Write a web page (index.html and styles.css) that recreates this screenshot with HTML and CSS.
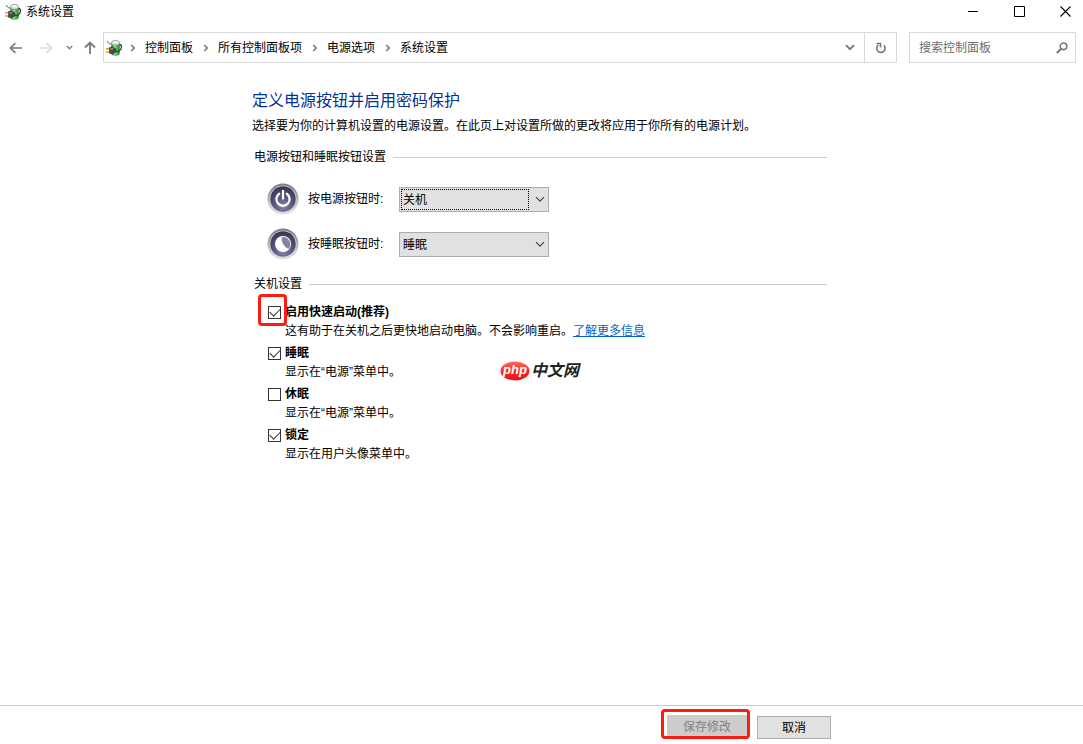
FILE: index.html
```html
<!DOCTYPE html>
<html lang="zh-CN">
<head>
<meta charset="utf-8">
<meta name="viewport" content="width=device-width, initial-scale=1">
<title>系统设置</title>
<link rel="stylesheet" href="styles.css">
</head>
<body>
<svg class="defs" width="0" height="0" aria-hidden="true">
  <defs>
    <linearGradient id="cell" x1="0" x2="1"><stop offset="0" stop-color="#2d9a38"/><stop offset=".4" stop-color="#7bea7c"/><stop offset="1" stop-color="#1c8a2a"/></linearGradient>
    <linearGradient id="ring" x1="0" y1="0" x2="0" y2="1"><stop offset="0" stop-color="#77777d"/><stop offset=".5" stop-color="#b4b4b8"/><stop offset="1" stop-color="#e6e6e6"/></linearGradient>
    <radialGradient id="disc" cx=".5" cy=".8" r=".8"><stop offset="0" stop-color="#8585aa"/><stop offset=".5" stop-color="#55557c"/><stop offset="1" stop-color="#34344f"/></radialGradient>
    <linearGradient id="oval" x1="0" y1="0" x2="0" y2="1"><stop offset="0" stop-color="#ff6a5e"/><stop offset=".5" stop-color="#f52c28"/><stop offset="1" stop-color="#e81515"/></linearGradient>
    <symbol id="power-plug" viewBox="0 0 16 16">
      <path d="M5.500 4h8v9.500c0 2.500-8 2.500-8 0z" fill="url(#cell)" stroke="#2c7a36" stroke-width=".5"/>
      <path d="M5.500 4.500V2.500C5.500-.2 13.500-.2 13.500 2.500v2c-2 1-6 1-8 0z" fill="#d8dbe8" stroke="#70747e" stroke-width=".6"/>
      <ellipse cx="9.500" cy="2.200" rx="2.600" ry="1" fill="#fff"/>
      <path d="M13.500 4.500c3 .5 2.500 4.500-.5 6.500-1 .8-2 .8-3 .5" fill="none" stroke="#3b3b3b" stroke-width="1.300"/>
      <path d="M1.500 1c.5 2 1.500 3 3.500 3" fill="none" stroke="#555" stroke-width="1"/>
      <path d="M0 8.700h4M0 12h4" stroke="#e0a21c" stroke-width="1.600"/>
      <path d="M3.500 7.500 6.500 7l3.500 2v2.800L6.500 14l-3-.7z" fill="#4b4b4b" stroke="#252525" stroke-width=".5"/>
      <path d="M4.500 9l2.500-.3" stroke="#bbb" stroke-width="1"/>
    </symbol>
    <symbol id="chev-right" viewBox="0 0 6 8"><path d="M1.200 1 4.200 4l-3 3" fill="none" stroke="#777" stroke-width="1.600"/></symbol>
    <symbol id="chev-down" viewBox="0 0 10 7"><path d="M1 1.200 5 5.200l4-4" fill="none" stroke="currentColor" stroke-width="var(--weight)"/></symbol>
  </defs>
</svg>

<header class="titlebar">
  <svg class="app-icon" width="16" height="16"><use href="#power-plug"/></svg>
  <h1 class="window-title">系统设置</h1>
  <div class="window-controls">
    <button class="window-button" aria-label="最小化"><svg width="11" height="11" viewBox="0 0 11 11"><path d="M0 5.500h10" stroke="#000"/></svg></button>
    <button class="window-button" aria-label="最大化"><svg width="11" height="11" viewBox="0 0 11 11"><path d="M.5.5h10v10h-10z" fill="none" stroke="#000"/></svg></button>
    <button class="window-button window-close" aria-label="关闭"><svg width="11" height="11" viewBox="0 0 11 11"><path d="m.5.5 10 10m0-10-10 10" stroke="#000" stroke-width="1.100"/></svg></button>
  </div>
</header>

<nav class="toolbar" aria-label="导航">
  <div class="history">
    <button class="tool" aria-label="后退"><svg width="14" height="12" viewBox="0 0 14 12"><path d="M1.500 6H13M6.300 1.200 1.500 6l4.800 4.800" fill="none" stroke="#777" stroke-width="1.700"/></svg></button>
    <button class="tool" aria-label="前进" disabled><svg width="14" height="12" viewBox="0 0 14 12"><path d="M1 6h11.500M7.700 1.200 12.500 6l-4.800 4.800" fill="none" stroke="#ddd" stroke-width="1.700"/></svg></button>
    <button class="tool tool-recent" aria-label="最近的位置"><svg class="chev-strong" width="7" height="5"><use href="#chev-down"/></svg></button>
    <button class="tool tool-up" aria-label="上移"><svg width="12" height="14" viewBox="0 0 12 14"><path d="M6 1.500V13M1 6.500l5-5 5 5" fill="none" stroke="#777" stroke-width="1.800"/></svg></button>
  </div>
  <div class="address">
    <svg class="address-icon" width="16" height="16"><use href="#power-plug"/></svg>
    <ol class="crumbs">
      <li class="crumb"><svg class="separator" width="6" height="8"><use href="#chev-right"/></svg><a class="crumb-link" href="#">控制面板</a></li>
      <li class="crumb"><svg class="separator" width="6" height="8"><use href="#chev-right"/></svg><a class="crumb-link" href="#">所有控制面板项</a></li>
      <li class="crumb"><svg class="separator" width="6" height="8"><use href="#chev-right"/></svg><a class="crumb-link" href="#">电源选项</a></li>
      <li class="crumb"><svg class="separator" width="6" height="8"><use href="#chev-right"/></svg><a class="crumb-link" href="#">系统设置</a></li>
    </ol>
    <button class="address-button" aria-label="以前的位置"><svg class="chev-strong" width="10" height="7"><use href="#chev-down"/></svg></button>
    <button class="address-button refresh" aria-label="刷新"><svg width="12" height="12" viewBox="0 0 12 12"><path d="M9 3.400A4.200 4.200 0 1 1 3.200 3M1.500 1.500h4v4" fill="none" stroke="#777" stroke-width="1.600"/></svg></button>
  </div>
  <div class="search">
    <input class="search-input" type="search" placeholder="搜索控制面板" aria-label="搜索控制面板">
    <svg width="12" height="12" viewBox="0 0 12 12"><circle cx="7.500" cy="4.300" r="3.300" fill="none" stroke="#777" stroke-width="1.600"/><path d="M5 6.800.8 11" stroke="#777" stroke-width="2"/></svg>
  </div>
</nav>

<main class="page">
  <h2 class="page-title">定义电源按钮并启用密码保护</h2>
  <p class="intro">选择要为你的计算机设置的电源设置。在此页上对设置所做的更改将应用于你所有的电源计划。</p>

  <section class="group">
    <h3 class="group-title">电源按钮和睡眠按钮设置</h3>
    <div class="actions">
      <div class="action">
        <svg width="32" height="32" viewBox="0 0 32 32"><circle cx="16" cy="16" r="15.500" fill="url(#ring)"/><circle cx="16" cy="16" r="13.400" fill="#d2d2d8"/><circle cx="16" cy="16" r="12.700" fill="url(#disc)"/><path d="M12.200 10.800a6.600 6.600 0 1 0 7.600 0" fill="none" stroke="#fff" stroke-width="2.300" stroke-linecap="round"/><path d="M16 8v7.500" stroke="#fff" stroke-width="2.300" stroke-linecap="round"/></svg>
        <label class="action-label" for="power">按电源按钮时:</label>
        <div class="picker picker-focused">
          <select class="picker-select" id="power"><option>关机</option><option>睡眠</option></select>
          <svg class="picker-arrow" width="10" height="7"><use href="#chev-down"/></svg>
        </div>
      </div>
      <div class="action">
        <svg width="32" height="32" viewBox="0 0 32 32"><circle cx="16" cy="16" r="15.500" fill="url(#ring)"/><circle cx="16" cy="16" r="13.400" fill="#d2d2d8"/><circle cx="16" cy="16" r="12.700" fill="url(#disc)"/><circle cx="16" cy="16" r="8" fill="#fff"/><path d="M15 9c4.500-.5 8.500 3 8.200 7.500-.1 1.800-.7 3.200-1.700 4.300C17.500 19 13.500 14 15 9z" fill="#8585a3"/></svg>
        <label class="action-label" for="sleep-button">按睡眠按钮时:</label>
        <div class="picker">
          <select class="picker-select" id="sleep-button"><option>睡眠</option><option>关机</option></select>
          <svg class="picker-arrow" width="10" height="7"><use href="#chev-down"/></svg>
        </div>
      </div>
    </div>
  </section>

  <section class="group">
    <h3 class="group-title">关机设置</h3>
    <ul class="options">
      <li class="option">
        <span class="tick tick-marked"><input class="tick-box" type="checkbox" id="fast" checked></span>
        <label class="option-label" for="fast">启用快速启动(推荐)</label>
        <p class="option-text">这有助于在关机之后更快地启动电脑。不会影响重启。<a class="more" href="#">了解更多信息</a></p>
      </li>
      <li class="option">
        <span class="tick"><input class="tick-box" type="checkbox" id="sleep" checked></span>
        <label class="option-label" for="sleep">睡眠</label>
        <p class="option-text">显示在“电源”菜单中。</p>
      </li>
      <li class="option">
        <span class="tick"><input class="tick-box" type="checkbox" id="hibernate"></span>
        <label class="option-label" for="hibernate">休眠</label>
        <p class="option-text">显示在“电源”菜单中。</p>
      </li>
      <li class="option">
        <span class="tick"><input class="tick-box" type="checkbox" id="lock" checked></span>
        <label class="option-label" for="lock">锁定</label>
        <p class="option-text">显示在用户头像菜单中。</p>
      </li>
    </ul>
  </section>

  <div class="watermark"><span class="watermark-badge"><svg class="watermark-oval" width="30" height="20" viewBox="0 0 30 20"><ellipse cx="15" cy="10" rx="14.500" ry="9.500" fill="url(#oval)"/></svg><span class="watermark-php">php</span></span><span class="watermark-name">中文网</span></div>
</main>

<footer class="footer">
  <div class="footer-inner">
    <span class="save-mark"><button class="button button-save" disabled>保存修改</button></span>
    <button class="button">取消</button>
  </div>
</footer>
</body>
</html>
```

FILE: styles.css
```css
*, *::before, *::after { box-sizing: border-box; }

body {
  --weight: 1.2;
  display: flex;
  flex-direction: column;
  min-height: 100vh;
  margin: 0;
  background: #fff;
  color: #000;
  font: 12px/18px "Liberation Sans", "Noto Sans CJK SC", sans-serif;
}

h1, h2, h3, p, ol, ul { margin: 0; padding: 0; font-size: 12px; font-weight: 400; list-style: none; }
button, input, select { margin: 0; padding: 0; font: inherit; color: inherit; }
svg { display: block; flex: none; }
.defs { position: absolute; }

/* Window frame */
.titlebar { display: flex; align-items: center; height: 23px; padding-left: 5px; }
.window-title { flex: 1; padding-left: 5px; }
.window-controls { display: flex; }
.window-button { display: flex; align-items: center; justify-content: center; width: 46px; height: 23px; border: 0; background: none; }
.window-close { width: 41px; padding-left: 5px; }

.toolbar { display: flex; height: 31px; margin-top: 9px; padding-right: 7px; }
.history { display: flex; align-items: center; width: 103px; padding-left: 9px; }
.tool { display: flex; align-items: center; justify-content: center; width: 14px; height: 30px; margin-right: 16px; border: 0; background: none; }
.tool-recent { width: 9px; margin-right: 10px; margin-left: -4px; }
.tool-up { width: 12px; margin-right: 0; }
.chev-strong { --weight: 1.9; color: #777; }

.address { display: flex; flex: 1; align-items: center; border: 1px solid #d9d9d9; }
.address-icon { margin-left: 2px; }
.crumbs { display: flex; flex: 1; }
.crumb { display: flex; align-items: center; }
.separator { margin: 0 9px 0 10px; }
.crumb:first-child .separator { margin-left: 8px; }
.crumb-link { color: #000; text-decoration: none; white-space: nowrap; }
.address-button { display: flex; align-items: center; justify-content: center; width: 29px; height: 29px; border: 0; background: none; }
.refresh { width: 32px; border-left: 1px solid #d9d9d9; }

.search { display: flex; align-items: center; width: 167px; margin-left: 12px; padding: 0 7px 0 9px; border: 1px solid #d9d9d9; }
.search-input { flex: 1; min-width: 0; border: 0; outline: 0; background: none; }
.search-input::placeholder { color: #6d6d6d; opacity: 1; }

/* Settings page */
.page { position: relative; flex: 1; width: 100%; max-width: 579px; margin: 0 auto; padding: 26px 4px 24px 0; }
.page-title { color: #003399; font-size: 16px; line-height: 24px; }
.intro { margin-top: 4px; }
.group { padding-left: 2px; }
.intro + .group { margin-top: 13px; }
.group-title { display: flex; align-items: center; }
.group-title::after { content: ""; flex: 1; height: 1px; margin-left: 7px; background: #ccc; }

.actions { display: grid; gap: 13px; padding: 17px 0 15px 13px; }
.action { display: flex; align-items: center; }
.action-label { width: 92px; padding-left: 9px; white-space: nowrap; }
.picker { position: relative; width: 150px; margin-left: 8px; }
.picker-select { display: block; width: 100%; height: 25px; padding: 2px 20px 0 3px; border: 1px solid #adadad; border-radius: 0; outline: 0; background: #e1e1e1; appearance: none; }
.picker-focused::before { content: ""; position: absolute; inset: 2px 20px 2px 2px; border: 1px dotted #000; pointer-events: none; }
.picker-arrow { position: absolute; top: 9px; right: 4px; color: #444; pointer-events: none; }

.options { display: grid; gap: 4px; padding: 10px 0 0 14px; }
.option { display: grid; grid-template-columns: 17px 1fr; row-gap: 1px; }
.tick { position: relative; padding-top: 3px; }
.tick-box { display: block; width: 13px; height: 13px; border: 1px solid #333; background: #fff; appearance: none; }
.tick-box:checked::after { content: ""; display: block; width: 10px; height: 6px; margin: 1px 0 0 1px; border: solid #333; border-width: 0 0 1px 1px; transform: rotate(-45deg); }
.tick-marked::after { content: ""; position: absolute; top: -9px; left: -10px; width: 29px; height: 32px; border: 3px solid #fb1d12; border-radius: 4px; pointer-events: none; }
.option-label { justify-self: start; font-weight: 700; }
.option-text { grid-column: 2; }
.more { color: #0066cc; }

.watermark { position: absolute; top: 298px; left: 248px; display: flex; align-items: center; gap: 1px; font-style: italic; font-weight: 700; pointer-events: none; }
.watermark-badge { display: grid; place-items: center; }
.watermark-oval, .watermark-php { grid-area: 1 / 1; }
.watermark-php { padding-bottom: 2px; color: #fff; font-size: 13px; }
.watermark-name { color: #222; font-size: 16px; }

/* Command bar */
.footer { border-top: 1px solid #ccc; }
.footer-inner { display: flex; justify-content: flex-end; gap: 7px; max-width: 579px; margin: 0 auto; padding: 3px 0 5px; }
.button { width: 74px; height: 23px; margin-top: 7px; border: 1px solid #adadad; background: #e1e1e1; }
.save-mark { width: 89px; height: 30px; border: 3px solid #fb1d12; border-radius: 4px; }
.button-save { display: block; width: 80px; height: 21px; margin: 3px 0 0 3px; padding-top: 2px; border: 0; background: #ccc; color: #838383; }
```
